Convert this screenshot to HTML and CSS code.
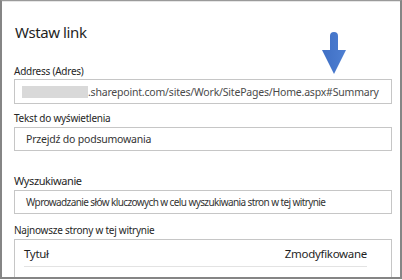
FILE: index.html
```html
<!DOCTYPE html>
<html lang="pl">
<head>
    <meta charset="UTF-8">
    <title>Wstaw link</title>
    <link rel="stylesheet" href="styles.css">
</head>
<body>
    <div class="dialog">
        <h1 class="dialog-title">Wstaw link</h1>

        <!-- arrow pointing at the #Summary part of the url -->
        <svg class="pointer-arrow" width="26" height="44" viewBox="0 0 26 44">
            <defs>
                <linearGradient id="arrowFill" x1="0" y1="0" x2="1" y2="0">
                    <stop offset="0" stop-color="#3f6fc4"/>
                    <stop offset="1" stop-color="#4e7fd2"/>
                </linearGradient>
            </defs>
            <path d="M9 4 a4 4 0 0 1 8 0 V18 H25 L13 42 L1 18 H9 Z" fill="url(#arrowFill)"/>
        </svg>

        <div class="field address-field">
            <label class="field-label">Address (Adres)</label>
            <div class="field-box url-box">
                <span class="url-blur"></span><span class="url-text">.sharepoint.com/sites/Work/SitePages/Home.aspx#Summary</span>
            </div>
        </div>

        <div class="field">
            <label class="field-label">Tekst do wyświetlenia</label>
            <div class="field-box">Przejdź do podsumowania</div>
        </div>

        <div class="field search-field">
            <label class="field-label big">Wyszukiwanie</label>
            <div class="field-box small-text">Wprowadzanie słów kluczowych w celu wyszukiwania stron w tej witrynie</div>
        </div>

        <div class="field recent-field">
            <label class="field-label">Najnowsze strony w tej witrynie</label>
            <div class="recent-table">
                <div class="recent-row head">
                    <span class="col-title">Tytuł</span>
                    <span class="col-date">Zmodyfikowane</span>
                </div>
                <div class="recent-row">
                    <span class="col-title">Work @ Contoso</span>
                    <span class="col-date">Aug 13, 2019</span>
                </div>
            </div>
        </div>
    </div>
</body>
</html>
```

FILE: styles.css
```css
* {
    margin: 0;
    padding: 0;
    box-sizing: border-box;
}

body {
    background: #ffffff;
    font-family: 'Noto Sans', 'Open Sans', sans-serif;
    color: #262626;
}

.dialog {
    position: relative;
    height: 279px;
    overflow: hidden;
    border: 2px solid #858585;
    border-top: 1px solid #9a9a9a;
    box-shadow: inset 0 1px 0 #e6e6e6;
    padding: 20px 8px 0 12px;
    background: #ffffff;
}

.dialog-title {
    font-size: 15px;
    font-weight: 400;
    line-height: 22px;
    letter-spacing: -0.4px;
    color: #1f1f1f;
    margin: 0 0 21px 1px;
}

.pointer-arrow {
    position: absolute;
    left: 319px;
    top: 31px;
}

.field {
    margin-bottom: 7px;
}

.field-label {
    display: block;
    font-size: 10px;
    line-height: 14px;
    letter-spacing: -0.25px;
    color: #262626;
    margin-bottom: 2px;
}

.address-field .field-label {
    margin-bottom: 1px;
}

.field-label.big {
    font-size: 11px;
    letter-spacing: -0.4px;
}

.field-box {
    display: flex;
    align-items: center;
    height: 24px;
    border: 1px solid #c6c6c6;
    padding: 0 11px;
    font-size: 10.5px;
    letter-spacing: -0.2px;
    color: #333333;
    white-space: nowrap;
    overflow: hidden;
}

.url-box {
    height: 25px;
    padding-left: 7px;
    color: #4a4a4a;
}

.url-blur {
    display: inline-block;
    flex-shrink: 0;
    width: 66px;
    height: 12px;
    background: #d9d9d9;
}

.url-text {
    font-size: 10.5px;
    letter-spacing: -0.2px;
}

.search-field {
    margin-top: 23px;
    margin-bottom: 9px;
}

.field-box.small-text {
    font-size: 10px;
    letter-spacing: -0.6px;
}

.recent-table {
    border: 1px solid #c6c6c6;
    padding: 0 24px 0 9px;
}

.recent-row {
    display: flex;
    align-items: center;
    height: 26px;
    font-size: 11.5px;
    letter-spacing: -0.3px;
    color: #1f1f1f;
}

.recent-row.head {
    height: 27px;
    border-bottom: 1px solid #e3e3e3;
}

.recent-row .col-title {
    flex: 1;
}

.recent-row .col-date {
    text-align: right;
}

.recent-row:not(.head) {
    color: #8a8a8a;
    font-size: 11px;
}
```
